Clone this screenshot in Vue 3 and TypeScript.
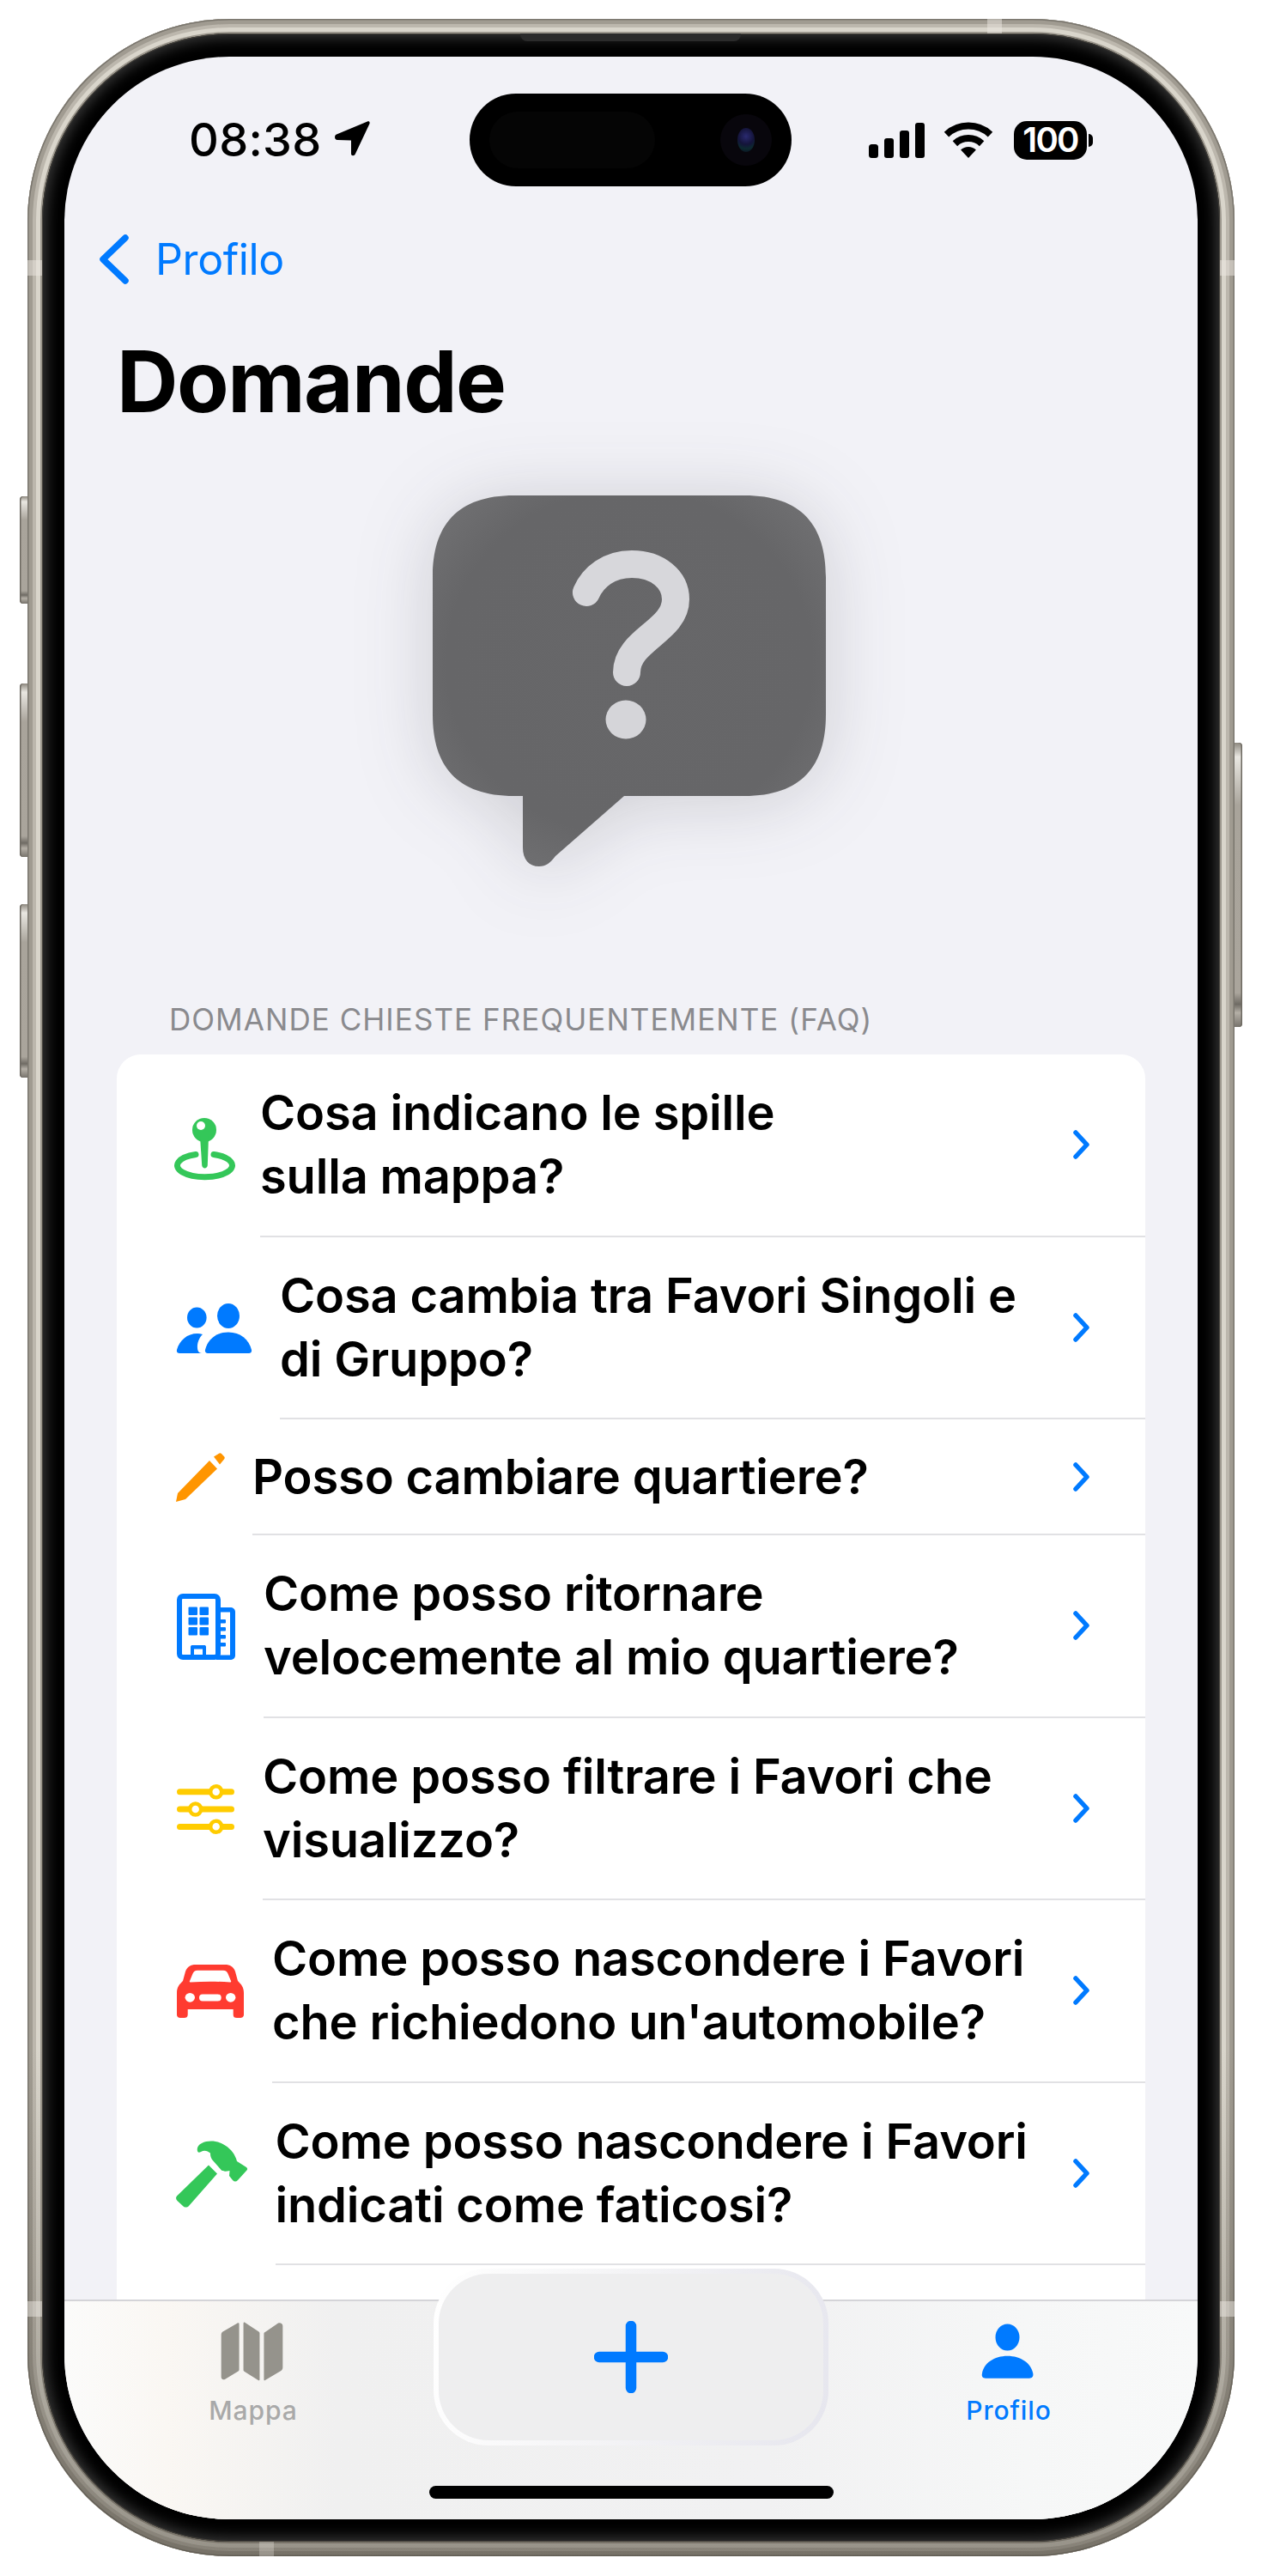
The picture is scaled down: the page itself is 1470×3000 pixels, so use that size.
<script setup lang="ts">
interface Row { icon: string; sepX: number; lines: string[] }
const rows: Row[] = [
  { icon: 'pin', sepX: 303, lines: ['Cosa indicano le spille', 'sulla mappa?'] },
  { icon: 'people', sepX: 326, lines: ['Cosa cambia tra Favori Singoli e', 'di Gruppo?'] },
  { icon: 'pencil', sepX: 294, lines: ['Posso cambiare quartiere?'] },
  { icon: 'building', sepX: 307, lines: ['Come posso ritornare', 'velocemente al mio quartiere?'] },
  { icon: 'sliders', sepX: 306, lines: ['Come posso filtrare i Favori che', 'visualizzo?'] },
  { icon: 'car', sepX: 317, lines: ['Come posso nascondere i Favori', "che richiedono un'automobile?"] },
  { icon: 'hammer', sepX: 320.5, lines: ['Come posso nascondere i Favori', 'indicati come faticosi?'] },
]
const iconBoxWidth = (r: Row) => `${r.sepX - 206}px`
</script>

<template>
  <div class="page">
    <div class="phone">
      <span class="side side-l b1"></span>
      <span class="side side-l b2"></span>
      <span class="side side-l b3"></span>
      <span class="side side-r b4"></span>
      <span class="band band-v bl1"></span>
      <span class="band band-v br1"></span>
      <span class="band band-v bl2"></span>
      <span class="band band-v br2"></span>
      <span class="band band-h bt"></span>
      <span class="band band-h bb"></span>
      <div class="bezel">
        <span class="speaker"></span>
        <div class="screen">
          <header class="status">
            <div class="status-left">
              <span class="time">08:38</span>
              <svg class="loc" width="41" height="41" viewBox="0 0 41 41"><path d="M38 .5C40 0 41 1 40.5 3L24 38C23 41 19 41 19 38L19 22.5 3 22C-.5 21.5-1 17 2 15.5Z" /></svg>
            </div>
            <div class="island">
              <span class="sensor"></span>
              <span class="cam"><span class="lens"></span></span>
            </div>
            <div class="status-right">
              <svg width="65" height="41" viewBox="0 0 65 41">
                <rect x="0" y="25" width="11" height="16" rx="3.5" />
                <rect x="18" y="18" width="11" height="23" rx="3" />
                <rect x="36" y="9" width="11" height="32" rx="3" />
                <rect x="54" y="0" width="11" height="41" rx="3" />
              </svg>
              <svg class="wifi" width="58" height="42" viewBox="0 0 58 42">
                <path d="M3.5 14.6A37.5 37.5 0 0 1 54.5 14.6" fill="none" stroke="#000" stroke-width="8" />
                <path d="M13.4 25.2A23 23 0 0 1 44.6 25.2" fill="none" stroke="#000" stroke-width="8" />
                <path d="M29 42L20.1 32.5A13 13 0 0 1 37.9 32.5Z" />
              </svg>
              <div class="battery"><span class="batt-num">100</span></div>
              <span class="batt-cap"></span>
            </div>
          </header>

          <nav class="nav">
            <svg width="34" height="58" viewBox="0 0 34 58"><path d="M30 4L4 29L30 54" fill="none" stroke="#007aff" stroke-width="7.5" stroke-linecap="round" stroke-linejoin="round" /></svg>
            <span class="back">Profilo</span>
          </nav>

          <h1 class="title">Domande</h1>

          <div class="hero">
            <svg class="bubble" width="458" height="432" viewBox="0 0 458 432">
              <defs>
                <radialGradient id="bubbleFill" cx="50%" cy="45%" r="62%">
                  <stop offset="0%" stop-color="#676769" />
                  <stop offset="75%" stop-color="#666668" />
                  <stop offset="100%" stop-color="#707072" />
                </radialGradient>
              </defs>
              <path fill="url(#bubbleFill)" d="M95 0H363C430 0 458 35 458 95V255C458 315 430 350 363 350H223L143 420C137 428 132 432 124 432C112 432 105 424 105 410V350H95C28 350 0 315 0 255V95C0 35 28 0 95 0Z" />
              <path d="M179 113C187 95 205 80 232 80C262 80 283 98 283 121C283 158 226 168 226 206" fill="none" stroke="#d7d7db" stroke-width="32" stroke-linecap="round" />
              <ellipse cx="225" cy="261" rx="23.5" ry="22.5" fill="#d5d5d9" />
            </svg>
          </div>

          <div class="section-head">DOMANDE CHIESTE FREQUENTEMENTE (FAQ)</div>

          <section class="card">
            <div v-for="r in rows" :key="r.icon" class="row" :class="{ single: r.lines.length === 1 }">
              <div class="icon-box" :style="{ width: iconBoxWidth(r) }">
                <svg v-if="r.icon === 'pin'" class="ic ic-pin" width="71" height="73" viewBox="0 0 71 73">
                  <path d="M25 43.5A32 13.5 0 1 0 46 43.5" fill="none" stroke="#34c759" stroke-width="7" stroke-linecap="round" />
                  <circle cx="35" cy="15" r="14" fill="#34c759" />
                  <path d="M30 22H40L38.8 56C38.5 60.5 32.5 60.5 32.2 56Z" fill="#34c759" />
                  <circle cx="31" cy="10" r="5" fill="#fff" />
                </svg>
                <svg v-else-if="r.icon === 'people'" class="ic" width="87" height="58" viewBox="0 0 87 58" fill="#007aff">
                  <ellipse cx="23.3" cy="16.6" rx="11.3" ry="12" />
                  <ellipse cx="60" cy="14.5" rx="13" ry="14.5" />
                  <path d="M33 54C36 42 46 33.5 60 33.5C74 33.5 84 42 87 54C87.5 57 86 58 84 58H36C34 58 32.5 57 33 54Z" />
                  <path d="M0 54C3 43 12 35 24 35C26 35 28 35.3 30 36C26 40 23.5 46 24 52C24 55 26 58 29 58H4C1 58-.5 57 0 54Z" />
                </svg>
                <svg v-else-if="r.icon === 'pencil'" class="ic ic-pencil" width="57" height="57" viewBox="0 0 57 57" fill="#ff9500">
                  <path d="M0 57L2 47 39 9 48 18.500 11 54Z" />
                  <path d="M44 4.500L50 .7C51 0 52 0 53 1L56.300 4.500C57 5.500 57 6.500 56 7.500L51 13.500Z" />
                </svg>
                <svg v-else-if="r.icon === 'building'" class="ic" width="68" height="77" viewBox="0 0 68 77">
                  <rect x="3" y="3" width="45" height="71" rx="4" fill="#fff" stroke="#007aff" stroke-width="6" />
                  <path d="M49 16H62C65.500 16 68 18 68 21V72C68 75 65.500 77 62 77H46V71.500H62V21.500H49Z" fill="#007aff" />
                  <g fill="#007aff">
                    <rect x="13.500" y="15.500" width="10.500" height="9.500" rx="1" /><rect x="26.500" y="15.500" width="10.500" height="9.500" rx="1" />
                    <rect x="13.500" y="27.500" width="10.500" height="9" rx="1" /><rect x="26.500" y="27.500" width="10.500" height="9" rx="1" />
                    <rect x="13.500" y="39" width="10.500" height="9.500" rx="1" /><rect x="26.500" y="39" width="10.500" height="9.500" rx="1" />
                    <rect x="50" y="30" width="7" height="4.500" rx="1" /><rect x="50" y="39" width="7" height="4.500" rx="1" /><rect x="50" y="48" width="7" height="4.500" rx="1" /><rect x="50" y="57" width="7" height="4.500" rx="1" />
                    <path d="M16 75V62C16 60.500 17 60 18 60H32C33 60 34 60.500 34 62V75H30V64.500H20V75Z" />
                  </g>
                </svg>
                <svg v-else-if="r.icon === 'sliders'" class="ic" width="67" height="58" viewBox="0 0 67 58">
                  <g stroke="#ffcc00" stroke-width="7" stroke-linecap="round">
                    <path d="M3.500 8.700H63.500M3.500 29H63.500M3.500 49.400H63.500" />
                  </g>
                  <g fill="#fff" stroke="#ffcc00" stroke-width="4.500">
                    <circle cx="45.700" cy="8.800" r="6.500" />
                    <circle cx="21.700" cy="29" r="6.500" />
                    <circle cx="45.700" cy="49.200" r="6.500" />
                  </g>
                </svg>
                <svg v-else-if="r.icon === 'car'" class="ic" width="78" height="62" viewBox="0 0 78 62">
                  <path fill="#ff3b30" d="M22 0H56C62 0 66 2.500 68 8L71 19C75 23 78 26 78 33V58C78 61 76 62 73.500 62H70C67 62 65.700 61 65.700 58V52H12.700V58C12.700 61 11 62 8.500 62H4.500C2 62 0 61 0 58V33C0 26 3 23 7 19L10 8C12 2.500 16 0 22 0Z" />
                  <path fill="#fff" d="M24 6.700H54C57 6.700 58.500 8 59.500 10.500L63 19C63.500 20 63 20.500 62 20.500C47 19.500 31 19.500 16 20.500C15 20.500 14.500 20 15 19L18.500 10.500C19.500 8 21 6.700 24 6.700Z" />
                  <ellipse cx="15.300" cy="38.300" rx="5.700" ry="5.400" fill="#fff" />
                  <ellipse cx="62.700" cy="38.300" rx="5.700" ry="5.400" fill="#fff" />
                  <rect x="26" y="34.400" width="25.700" height="8" rx="4" fill="#fff" />
                </svg>
                <svg v-else class="ic ic-hammer" width="83" height="78" viewBox="0 0 83 78" fill="#34c759">
                  <path d="M25 12C24 8 26 5 30 3C38-1 50 0 58 6C64 10 69 16 71 24L82 31C83.500 32 83.500 34 82 35L72 46C70 48 68 48 66 46L62 41 62.500 35C58 36 55 36 53 34.500L42 22C40 19 40 16 40 14.500C37 12 33 10.500 29 13C27 14 25.500 14 25 12Z" />
                  <path d="M38 28.500L48 38.500 15 76C13 78 10 78 8 76L1.500 70C-.5 68-.5 65.500 2 63.500Z" />
                </svg>
              </div>
              <div class="row-body">
                <div class="row-text">
                  <span v-for="l in r.lines" :key="l" class="line">{{ l }}</span>
                </div>
                <svg class="chev" width="19" height="34" viewBox="0 0 19 34"><path d="M3 3L16 17L3 31" fill="none" stroke="#007aff" stroke-width="5.500" stroke-linecap="round" stroke-linejoin="round" /></svg>
              </div>
            </div>
            <div class="row row-empty"></div>
          </section>

          <footer class="tabbar">
            <div class="tab">
              <svg class="tab-ic" width="73" height="69" viewBox="50 34 220 208" fill="#95938c">
                <path d="M52 80C52 74 54 70 60 67L108 39C112 37 115 38 115 42V202C115 204 114 206 112 207L66 235C58 239 52 235 52 228Z" />
                <path d="M130 40C130 36 132 34 135 36L184 69C186 71 187 72 187 74V236C187 240 185 241 182 239L134 209C131 207 130 206 130 203Z" />
                <path d="M202 76C202 73 203 71 206 70L251 39C259 35 268 40 268 48V194C268 200 266 203 262 206L206 239C203 241 202 239 202 236Z" />
              </svg>
              <span class="tab-label">Mappa</span>
            </div>
            <div class="tab"></div>
            <div class="tab active">
              <svg class="tab-ic" width="62" height="69" viewBox="0 0 62 69" fill="#007aff">
                <ellipse cx="30.500" cy="18" rx="14" ry="15.500" />
                <path d="M1 60C3 48 15 39.700 30.500 39.700C46 39.700 58 48 60.300 60C61 64 59 65.700 56 65.700H5C2 65.700 0 64 1 60Z" />
              </svg>
              <span class="tab-label">Profilo</span>
            </div>
            <button class="add" type="button" aria-label="Aggiungi">
              <svg width="86" height="84" viewBox="0 0 86 84"><path d="M6 42H80M43 6V78" fill="none" stroke="#007aff" stroke-width="12.500" stroke-linecap="round" /></svg>
            </button>
            <span class="home"></span>
          </footer>
        </div>
      </div>
    </div>
  </div>
</template>

<style>
html, body { margin: 0; background: #fff; }
</style>

<style scoped>
.page {
  width: 1470px;
  height: 3000px;
  box-sizing: border-box;
  padding: 22px 0 0 32px;
  overflow: hidden;
  background: #fff;
  font-family: Inter, "Liberation Sans", sans-serif;
}
.phone {
  position: relative;
  width: 1406px;
  height: 2955px;
  box-sizing: border-box;
  padding: 17px;
  border-radius: 236px;
  background: #a8a499;
  box-shadow: inset 0 0 0 1.5px #7a766e, inset 0 0 0 6px #a09b91, inset 0 0 0 10px #bcb7ad, inset 0 0 0 15px #d9d5cb, inset 0 0 0 17px #9c978d;
}
.phone::before {
  content: "";
  position: absolute;
  inset: 0;
  border-radius: inherit;
  background: linear-gradient(180deg, rgba(70, 65, 55, 0) 80%, rgba(70, 65, 55, .45) 100%);
}
.side {
  position: absolute;
  width: 9px;
  background: linear-gradient(180deg, #8d887f 0, #e9e7e1 5%, #a9a49b 22%, #aaa59c 88%, #6f6b64 92%, #b4afa6 95%, #77736c 100%);
}
.side-l { left: -9px; border-radius: 4px 0 0 4px; box-shadow: inset 1.500px 0 0 #6c6860; }
.side-r { right: -9px; border-radius: 0 4px 4px 0; box-shadow: inset -1.500px 0 0 #6c6860; }
.b1 { top: 556px; height: 125px; }
.b2 { top: 774px; height: 202px; }
.b3 { top: 1031px; height: 202px; }
.b4 { top: 843px; height: 331px; }
.band { position: absolute; background: rgba(235, 232, 226, .5); }
.band-v { width: 17px; height: 18px; }
.band-h { width: 17px; height: 17px; }
.bl1 { left: 0; top: 281px; }
.br1 { right: 0; top: 281px; }
.bl2 { left: 0; top: 2658px; }
.br2 { right: 0; top: 2658px; }
.bt { left: 1118px; top: 0; }
.bb { left: 270px; bottom: 0; background: rgba(235, 232, 226, .3); }
.bezel {
  position: relative;
  height: 2921px;
  box-sizing: border-box;
  padding: 27px 26px 26px;
  border-radius: 219px;
  background: #000;
  box-shadow: inset 0 0 0 1px #45423c, inset 0 0 16px 5px #383838;
}
.speaker {
  position: absolute;
  left: 557px;
  top: 0;
  width: 257px;
  height: 9px;
  border-radius: 0 0 8px 8px;
  background: #2b2b2b;
}
.screen {
  position: relative;
  height: 2868px;
  border-radius: 192px;
  background: #f2f2f7;
  overflow: hidden;
}
.status {
  display: grid;
  grid-template-columns: 472px 375px 1fr;
  padding-top: 43px;
  height: 108px;
}
.status-left { display: flex; align-items: center; padding-left: 145px; gap: 15px; }
.time { font-size: 54px; font-weight: 500; line-height: 1; color: #000; letter-spacing: .3px; }
.loc { margin-top: -3px; }
.island {
  position: relative;
  height: 108px;
  border-radius: 54px;
  background: #000;
}
.sensor {
  position: absolute;
  left: 23px;
  top: 21px;
  width: 193px;
  height: 66px;
  border-radius: 33px;
  background: #050505;
}
.cam {
  position: absolute;
  left: 292px;
  top: 24px;
  width: 60px;
  height: 60px;
  border-radius: 50%;
  background: #08060c;
  display: flex;
  align-items: center;
  justify-content: center;
}
.lens {
  width: 20px;
  height: 28px;
  border-radius: 50%;
  background: radial-gradient(circle at 50% 35%, #2a2a70 0, #14143a 45%, #0c2a30 70%, #0a0a1a 100%);
}
.status-right { display: flex; align-items: center; padding-left: 90px; }
.wifi { margin-left: 22px; }
.battery {
  margin-left: 24px;
  width: 85px;
  height: 45px;
  border-radius: 15px;
  background: #000;
  display: flex;
  align-items: center;
  justify-content: center;
}
.batt-num { font-size: 40px; font-weight: 600; color: #fff; letter-spacing: -1.800px; line-height: 1; }
.batt-cap {
  width: 5px;
  height: 15px;
  margin-left: 2px;
  border-radius: 0 8px 8px 0;
  background: #000;
}
.nav {
  display: flex;
  align-items: center;
  gap: 31px;
  height: 58px;
  margin-top: 56px;
  padding-left: 41px;
}
.back { font-size: 50px; color: #007aff; line-height: 58px; letter-spacing: -.4px; }
.title {
  margin: 53px 0 0;
  padding-left: 61px;
  font-size: 99px;
  line-height: 120px;
  font-weight: 700;
  color: #000;
  letter-spacing: -1.500px;
}
.hero { display: flex; justify-content: center; margin-top: 73px; padding-right: 4px; }
.bubble { display: block; overflow: visible; filter: drop-shadow(0 6px 44px rgba(40, 40, 50, .18)); }
.section-head {
  margin-top: 156px;
  padding-left: 122px;
  font-size: 35px;
  line-height: 44px;
  color: #8a8a8e;
  letter-spacing: 1.050px;
}
.card {
  margin: 19px 61px 0;
  border-radius: 28px;
  background: #fff;
}
.row { display: flex; height: 212.500px; padding-left: 70px; }
.row.single { height: 135px; }
.icon-box { flex: none; display: flex; align-items: center; }
.ic { display: block; flex: none; overflow: visible; }
.ic-pin { margin: 6px 0 0 -3px; }
.ic-pencil { margin-left: -1px; }
.ic-hammer { margin-left: -1px; }
.row-body {
  flex: 1;
  min-width: 0;
  display: flex;
  align-items: center;
  justify-content: space-between;
  padding-right: 65px;
  border-bottom: 2px solid #e1e1e4;
}
.row-text { font-size: 56px; line-height: 74px; font-weight: 600; color: #000; letter-spacing: -.17px; white-space: nowrap; }
.line { display: block; }
.chev { flex: none; }
.row-empty { height: 300px; }
.tabbar {
  position: absolute;
  left: 0;
  right: 0;
  bottom: 0;
  height: 256px;
  box-sizing: border-box;
  padding-top: 24px;
  display: grid;
  grid-template-columns: repeat(3, 1fr);
  align-content: start;
  border-top: 2px solid #d4d4d8;
  background: linear-gradient(90deg, #fbfbfa 0, #faf7f3 9%, #f0f0f0 24%, #f1f1f2 62%, #f6f7f7 85%, #f8f9f9 100%);
}
.tab { display: flex; flex-direction: column; align-items: center; gap: 16px; }
.tab-ic { margin-left: -3px; }
.tab-label { font-size: 30px; line-height: 36px; font-weight: 500; color: #a9a9a9; letter-spacing: .9px; }
.active .tab-label { color: #007aff; }
.add {
  position: absolute;
  left: 430px;
  top: -38px;
  width: 460px;
  height: 206px;
  box-sizing: border-box;
  padding: 0;
  border: 6px solid transparent;
  border-radius: 64px;
  background: linear-gradient(#eeeeef, #eeeeef) padding-box, linear-gradient(100deg, #ffffff 0, #f4f4f6 45%, #e6e6ee 100%) border-box;
  display: flex;
  align-items: center;
  justify-content: center;
}
.home {
  position: absolute;
  left: 425px;
  bottom: 24px;
  width: 471px;
  height: 15px;
  border-radius: 8px;
  background: #000;
}
</style>
